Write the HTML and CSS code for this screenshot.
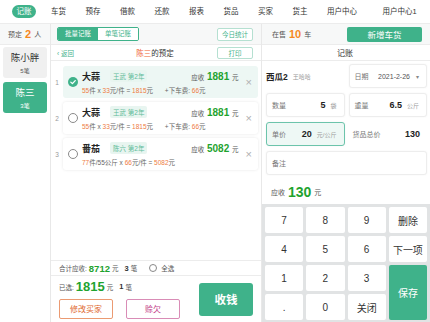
FILE: index.html
```html
<!DOCTYPE html>
<html lang="zh-CN">
<head>
    <meta charset="UTF-8">
    <meta name="viewport" content="width=device-width, initial-scale=1.0">
    <title>记账</title>
    <link rel="stylesheet" href="styles.css">
</head>
<body>
    <div class="app">
        <nav class="topnav">
            <a class="active">记账</a>
            <a>车货</a>
            <a>预存</a>
            <a>借款</a>
            <a>还款</a>
            <a>报表</a>
            <a>货品</a>
            <a>买家</a>
            <a>货主</a>
            <a>用户中心</a>
            <a>用户中心1</a>
        </nav>

        <div class="main">
            <!-- buyers -->
            <aside class="buyers">
                <div class="toolbar buyers-bar">
                    <span>预定</span><b class="num-orange">2</b><span>人</span>
                </div>
                <div class="buyer-list">
                    <div class="buyer">
                        <div class="buyer-name">陈小胖</div>
                        <div class="buyer-count">5笔</div>
                    </div>
                    <div class="buyer active">
                        <div class="buyer-name">陈三</div>
                        <div class="buyer-count">3笔</div>
                    </div>
                </div>
            </aside>

            <!-- orders -->
            <section class="orders">
                <div class="toolbar orders-bar">
                    <div class="toggle">
                        <span class="on">批量记账</span>
                        <span>单笔记账</span>
                    </div>
                    <button class="ghost-btn">今日统计</button>
                </div>
                <div class="title-row">
                    <span class="back">&lsaquo; 返回</span>
                    <span class="title"><em>陈三</em>的预定</span>
                    <button class="ghost-btn">打印</button>
                </div>

                <div class="order-list">
                    <div class="order-row">
                        <span class="idx">1</span>
                        <div class="order selected">
                            <span class="check done">
                                <svg viewBox="0 0 10 10" width="10" height="10"><circle cx="5" cy="5" r="5" fill="#3fb28a"/><path d="M2.8 5.1 L4.4 6.6 L7.2 3.6" fill="none" stroke="#fff" stroke-width="1.3" stroke-linecap="round" stroke-linejoin="round"/></svg>
                            </span>
                            <div class="order-body">
                                <div class="line1">
                                    <span class="goods">大蒜</span>
                                    <span class="tag">王武 第2年</span>
                                    <span class="due">应收 <b>1881</b> 元</span>
                                </div>
                                <div class="line2">
                                    <i>55</i>件 x <i>33</i>元/件 = <i>1815</i>元
                                    <span class="fee">+下车费: <i>66</i>元</span>
                                </div>
                            </div>
                            <span class="close">&times;</span>
                        </div>
                    </div>

                    <div class="order-row">
                        <span class="idx">2</span>
                        <div class="order">
                            <span class="check"></span>
                            <div class="order-body">
                                <div class="line1">
                                    <span class="goods">大蒜</span>
                                    <span class="tag">王武 第2年</span>
                                    <span class="due">应收 <b>1881</b> 元</span>
                                </div>
                                <div class="line2">
                                    <i>55</i>件 x <i>33</i>元/件 = <i>1815</i>元
                                    <span class="fee">+下车费: <i>66</i>元</span>
                                </div>
                            </div>
                            <span class="close">&times;</span>
                        </div>
                    </div>

                    <div class="order-row">
                        <span class="idx">3</span>
                        <div class="order">
                            <span class="check"></span>
                            <div class="order-body">
                                <div class="line1">
                                    <span class="goods">番茄</span>
                                    <span class="tag">陈六 第2年</span>
                                    <span class="due">应收 <b>5082</b> 元</span>
                                </div>
                                <div class="line2">
                                    <i>77</i>件/55公斤 x <i>66</i>元/件 = <i>5082</i>元
                                </div>
                            </div>
                            <span class="close">&times;</span>
                        </div>
                    </div>
                </div>

                <div class="orders-foot">
                    <div class="total-row">
                        合计应收: <b class="num-green">8712</b> 元
                        <b class="cnt">3</b> 笔
                        <span class="radio"></span> 全选
                    </div>
                    <div class="pay-row">
                        <div class="pay-left">
                            <div class="picked">已选: <b class="num-green big">1815</b> 元 <b class="cnt">1</b> 笔</div>
                            <div class="pay-actions">
                                <button class="btn-outline orange">修改买家</button>
                                <button class="btn-outline pink">赊欠</button>
                            </div>
                        </div>
                        <button class="btn-collect">收钱</button>
                    </div>
                </div>
            </section>

            <!-- ledger -->
            <section class="ledger">
                <div class="toolbar ledger-bar">
                    <span>在售</span><b class="num-orange">10</b><span>车</span>
                    <button class="btn-add">新增车货</button>
                </div>
                <div class="title-row center">记账</div>

                <div class="form">
                    <div class="cell plain">
                        <span class="goods-name">西瓜2</span><span class="owner">王哈哈</span>
                    </div>
                    <div class="cell box date">
                        <span class="label">日期</span>
                        <span class="value">2021-2-26</span>
                        <span class="caret">&#9662;</span>
                    </div>
                    <div class="cell box">
                        <span class="label">数量</span>
                        <b class="val">5</b><span class="unit">袋</span>
                    </div>
                    <div class="cell box">
                        <span class="label">重量</span>
                        <b class="val">6.5</b><span class="unit">公斤</span>
                    </div>
                    <div class="cell box focus">
                        <span class="label">单价</span>
                        <b class="val">20</b><span class="unit">元/公斤</span>
                    </div>
                    <div class="cell plain total">
                        <span class="label">货品总价</span>
                        <b class="val">130</b>
                    </div>
                    <div class="cell box wide">
                        <span class="label">备注</span>
                    </div>
                    <div class="due-row">
                        <span>应收</span><b>130</b><span>元</span>
                    </div>
                </div>

                <div class="keypad">
                    <button>7</button>
                    <button>8</button>
                    <button>9</button>
                    <button>删除</button>
                    <button>4</button>
                    <button>5</button>
                    <button>6</button>
                    <button>下一项</button>
                    <button>1</button>
                    <button>2</button>
                    <button>3</button>
                    <button class="save">保存</button>
                    <button>.</button>
                    <button>0</button>
                    <button>关闭</button>
                </div>
            </section>
        </div>
    </div>
</body>
</html>
```

FILE: styles.css
```css
* {
    box-sizing: border-box;
}

body {
    margin: 0;
    width: 430px;
    height: 322px;
    overflow: hidden;
    font-family: "Liberation Sans", "Noto Sans CJK SC", sans-serif;
    color: #333;
    background: #fff;
}

button {
    font-family: inherit;
    cursor: pointer;
}

.app {
    display: flex;
    flex-direction: column;
    height: 322px;
}

/* top nav */
.topnav {
    height: 24px;
    display: flex;
    align-items: center;
    padding-left: 12px;
    border-bottom: 1px solid #ececec;
    background: #fff;
    overflow: hidden;
}

.topnav a {
    flex-shrink: 0;
    white-space: nowrap;
    font-size: 7.5px;
    line-height: 1;
    padding: 2.5px 4.5px;
    margin-right: 10.5px;
    border-radius: 7px;
    color: #333;
}

.topnav a:last-child {
    margin-left: 6px;
    margin-right: 0;
}

.topnav a.active {
    background: #3fb28a;
    color: #fff;
}

.main {
    flex: 1;
    display: flex;
    min-height: 0;
}

.toolbar {
    height: 21px;
    display: flex;
    align-items: center;
    background: #f7f8f8;
    border-bottom: 1px solid #ececec;
    font-size: 7px;
    color: #555;
}

.num-orange {
    color: #f5891f;
    font-size: 11px;
    margin: 0 3px;
}

.num-green {
    color: #1fa32f;
    font-size: 9.5px;
}

.num-green.big {
    font-size: 13px;
}

/* buyers */
.buyers {
    width: 51px;
    border-right: 1px solid #e8e8e8;
    display: flex;
    flex-direction: column;
}

.buyers-bar {
    padding-left: 8px;
}

.buyer-list {
    display: flex;
    flex-direction: column;
    gap: 4px;
    padding: 2px 3px;
}

.buyer {
    height: 31px;
    border-radius: 3px;
    background: #f0f0f0;
    display: flex;
    flex-direction: column;
    align-items: center;
    justify-content: center;
}

.buyer-name {
    font-size: 9.5px;
    color: #333;
}

.buyer-count {
    font-size: 6px;
    color: #555;
    margin-top: 2px;
}

.buyer.active {
    background: #3fb28a;
}

.buyer.active .buyer-name,
.buyer.active .buyer-count {
    color: #fff;
}

/* orders */
.orders {
    width: 211px;
    border-right: 1px solid #e8e8e8;
    display: flex;
    flex-direction: column;
}

.orders-bar {
    padding: 0 8px 0 6px;
    justify-content: space-between;
}

.toggle {
    display: flex;
    border: 1px solid #3fb28a;
    border-radius: 2px;
    overflow: hidden;
}

.toggle span {
    width: 40px;
    height: 12px;
    font-size: 6.5px;
    line-height: 12px;
    text-align: center;
    color: #3fb28a;
    background: #fff;
}

.toggle span.on {
    background: #3fb28a;
    color: #fff;
}

.ghost-btn {
    width: 36px;
    height: 13px;
    padding: 0;
    font-size: 6.5px;
    color: #3fb28a;
    background: #fff;
    border: 1px solid #b5e0d1;
    border-radius: 2px;
}

.title-row {
    height: 16px;
    display: flex;
    align-items: center;
    justify-content: space-between;
    padding: 0 8px 0 6px;
    border-bottom: 1px solid #ececec;
    font-size: 7.5px;
}

.title-row .ghost-btn {
    height: 12px;
}

.title-row.center {
    justify-content: center;
    font-size: 8px;
}

.back {
    width: 36px;
    font-size: 6.5px;
    color: #3fb28a;
}

.title em {
    font-style: normal;
    color: #ef6434;
}

.order-list {
    flex: 1;
    display: flex;
    flex-direction: column;
    gap: 4px;
    padding: 5px 3px 0 0;
}

.order-row {
    display: flex;
    align-items: center;
}

.idx {
    width: 12px;
    text-align: center;
    font-size: 6.5px;
    color: #999;
}

.order {
    flex: 1;
    height: 32px;
    display: flex;
    align-items: center;
    padding: 0 6px 0 5px;
    border-radius: 3px;
    background: #fff;
    box-shadow: 0 0 3px rgba(0, 0, 0, 0.1);
}

.order.selected {
    background: #edf7f4;
    box-shadow: none;
}

.check {
    width: 10px;
    height: 10px;
    border-radius: 50%;
    border: 1px solid #8a8a8a;
    flex-shrink: 0;
}

.check.done {
    border: none;
    display: flex;
}

.order-body {
    flex: 1;
    margin-left: 4px;
    padding-right: 7px;
}

.line1 {
    display: flex;
    align-items: center;
    height: 14px;
}

.goods {
    font-size: 9px;
    font-weight: bold;
    color: #222;
}

.tag {
    margin-left: 10px;
    padding: 1px 3px;
    font-size: 6.5px;
    color: #5dbb98;
    background: #e8f5f0;
    border-radius: 2px;
}

.due {
    margin-left: auto;
    font-size: 6.5px;
    color: #555;
}

.due b {
    font-size: 10px;
    color: #1fa32f;
    margin: 0 1px;
}

.line2 {
    margin-top: 2px;
    font-size: 6.5px;
    color: #666;
}

.line2 i {
    font-style: normal;
    color: #ee7b3f;
}

.fee {
    margin-left: 10px;
}

.close {
    font-size: 11px;
    line-height: 1;
    color: #b0b0b0;
}

.orders-foot {
    border-top: 1px solid #ececec;
}

.total-row {
    height: 15px;
    display: flex;
    align-items: center;
    gap: 2px;
    padding-left: 8px;
    font-size: 6.5px;
    color: #555;
    border-bottom: 1px solid #ececec;
}

.cnt {
    font-size: 7.5px;
    color: #333;
    margin-left: 4px;
}

.radio {
    width: 8px;
    height: 8px;
    border-radius: 50%;
    border: 1px solid #888;
    margin: 0 2px 0 10px;
}

.pay-row {
    height: 46px;
    display: flex;
    align-items: center;
    justify-content: space-between;
    padding: 0 8px;
}

.picked {
    display: flex;
    align-items: center;
    gap: 2px;
    font-size: 6.5px;
    color: #555;
    height: 14px;
}

.pay-actions {
    display: flex;
    gap: 13px;
    margin-top: 5px;
}

.btn-outline {
    width: 54px;
    height: 20px;
    padding: 0;
    font-size: 8px;
    background: #fff;
    border-radius: 2px;
}

.btn-outline.orange {
    border: 1px solid #eb9a72;
    color: #e0682e;
}

.btn-outline.pink {
    border: 1px solid #d98cb6;
    color: #c3418a;
}

.btn-collect {
    width: 54px;
    height: 33px;
    border: none;
    border-radius: 3px;
    background: #3fb28a;
    color: #fff;
    font-size: 11.5px;
    font-weight: bold;
}

/* ledger */
.ledger {
    flex: 1;
    display: flex;
    flex-direction: column;
}

.ledger-bar {
    padding-left: 10px;
}

.btn-add {
    margin-left: auto;
    margin-right: 8px;
    width: 75px;
    height: 15px;
    padding: 0;
    border: none;
    border-radius: 2px;
    background: #3fb28a;
    color: #fff;
    font-size: 8.5px;
}

.form {
    flex: 1;
    display: grid;
    grid-template-columns: 1fr 1fr;
    grid-auto-rows: 24px;
    gap: 5px 4px;
    padding: 3px 3px 0 4px;
    align-content: start;
}

.cell {
    display: flex;
    align-items: center;
    font-size: 7px;
}

.cell.box {
    padding: 0 7px 0 5px;
    border: 1px solid #ededed;
    border-radius: 3px;
    background: #fff;
    box-shadow: 0 0 2px rgba(0, 0, 0, 0.05);
}

.cell.focus {
    border-color: #6cc4ab;
    background: #eef8f5;
}

.cell.wide {
    grid-column: span 2;
}

.label {
    color: #777;
}

.val {
    margin-left: auto;
    font-size: 9px;
    color: #222;
}

.unit {
    margin-left: 5px;
    font-size: 6px;
    color: #999;
}

.goods-name {
    font-size: 8.5px;
    font-weight: bold;
    color: #222;
}

.owner {
    margin-left: 5px;
    font-size: 6px;
    color: #999;
}

.date {
    padding-left: 7px;
}

.date .value {
    margin-left: auto;
    color: #555;
}

.caret {
    margin-left: 6px;
    font-size: 6px;
    color: #888;
}

.total {
    padding: 0 7px 0 4px;
}

.due-row {
    grid-column: span 2;
    display: flex;
    align-items: center;
    gap: 3px;
    padding-left: 5px;
    font-size: 7px;
    color: #555;
}

.due-row b {
    font-size: 14px;
    color: #1fa32f;
}

.keypad {
    height: 118px;
    display: grid;
    grid-template-columns: repeat(4, 1fr);
    grid-template-rows: repeat(4, 1fr);
    gap: 3px;
    padding: 3px 3px 2px 3px;
    background: #e1e3e4;
}

.keypad button {
    border: none;
    border-radius: 2px;
    background: #fff;
    font-size: 10px;
    color: #333;
    padding: 0;
}

.keypad .save {
    grid-column: 4;
    grid-row: 3 / span 2;
    background: #3fb28a;
    color: #fff;
}
```
